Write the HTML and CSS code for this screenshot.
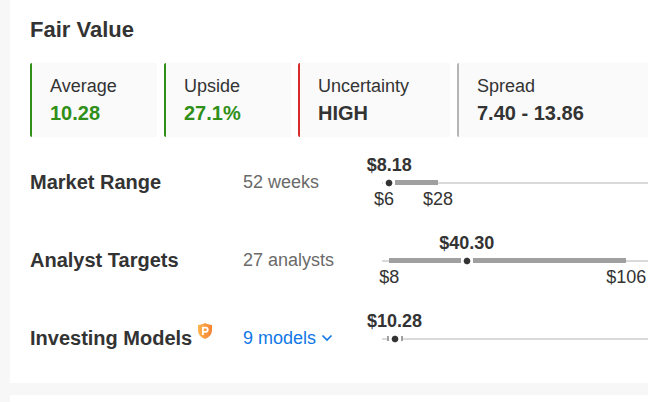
FILE: index.html
```html
<!DOCTYPE html>
<html lang="en">
<head>
<meta charset="utf-8">
<title>Fair Value</title>
<link rel="stylesheet" href="styles.css">
</head>
<body>
<main class="page">
  <section class="card">
    <h2 class="title">Fair Value</h2>
    <div class="tiles">
      <div class="tile tile-green"><span class="label">Average</span><strong class="figure">10.28</strong></div>
      <div class="tile tile-green"><span class="label">Upside</span><strong class="figure">27.1%</strong></div>
      <div class="tile tile-red"><span class="label">Uncertainty</span><strong class="figure">HIGH</strong></div>
      <div class="tile"><span class="label">Spread</span><strong class="figure">7.40 - 13.86</strong></div>
    </div>
    <div class="row">
      <h3 class="name">Market Range</h3>
      <span class="basis">52 weeks</span>
      <div class="chart">
        <div class="line"><b class="mark" style="left:2.7%">$8.18</b></div>
        <div class="track">
          <span class="range" style="left:2.7%;width:18.4%"></span>
          <span class="dot" style="left:2.7%"></span>
        </div>
        <div class="line"><span class="mark" style="left:0.8%">$6</span><span class="mark" style="left:21.1%">$28</span></div>
      </div>
    </div>
    <div class="row">
      <h3 class="name">Analyst Targets</h3>
      <span class="basis">27 analysts</span>
      <div class="chart">
        <div class="line"><b class="mark" style="left:31.9%">$40.30</b></div>
        <div class="track">
          <span class="range" style="left:2.7%;width:89%"></span>
          <span class="dot" style="left:31.9%"></span>
        </div>
        <div class="line"><span class="mark" style="left:2.7%">$8</span><span class="mark" style="left:91.8%">$106</span></div>
      </div>
    </div>
    <div class="row">
      <h3 class="name">Investing Models
        <svg class="badge" viewBox="0 0 14 16" aria-hidden="true">
          <defs><linearGradient id="g" x1="0" y1="0" x2="1" y2="0"><stop offset="0" stop-color="#ffb54d"/><stop offset="1" stop-color="#f58232"/></linearGradient></defs>
          <path fill="url(#g)" d="M7 0C9 1.200 11.300 1.800 14 2V7C14 11.200 11.300 14.400 7 16C2.700 14.400 0 11.200 0 7V2C2.700 1.800 5 1.200 7 0Z"/>
          <path fill="none" stroke="#fff" stroke-width="1.8" d="M4.900 12V4.700H7.700A2 2 0 0 1 7.700 8.800H4.900"/>
        </svg>
      </h3>
      <button class="models" type="button">9 models
        <svg class="chevron" viewBox="0 0 12 8" aria-hidden="true"><path fill="none" stroke="currentColor" stroke-width="1.7" d="M1.500 1.500L6 6L10.500 1.500"/></svg>
      </button>
      <div class="chart">
        <div class="line"><b class="mark" style="left:4.7%">$10.28</b></div>
        <div class="track">
          <span class="range" style="left:1.9%;width:6%"></span>
          <span class="dot" style="left:4.7%"></span>
        </div>
        <div class="line"></div>
      </div>
    </div>
  </section>
  <section class="card"></section>
</main>
</body>
</html>
```
FILE: styles.css
```css
* { box-sizing: border-box; }
body {
  margin: 0;
  background: #f7f7f7;
  color: #333;
  font: 18px/24px "Liberation Sans", Arial, sans-serif;
  overflow: hidden;
}
.page {
  display: flex;
  flex-direction: column;
  gap: 12px;
  padding-left: 10px;
}
.card {
  min-height: 24px;
  padding: 16px 0 6px 20px;
  background: #fff;
}
.title, .name { margin: 0; font-weight: 700; }
.title { margin-bottom: 19px; font-size: 22px; line-height: 28px; }
.tiles {
  display: grid;
  grid-template-columns: 127fr 127fr 152fr 191fr;
  gap: 7px;
  margin-bottom: 6px;
}
.tile {
  display: flex;
  flex-direction: column;
  padding: 10px 0 10px 18px;
  border-left: 2px solid #b5b5b5;
  border-radius: 2px 0 0 2px;
  background: #fafafa;
  white-space: nowrap;
}
.tile-green { border-color: #2f8f18; }
.tile-red { border-color: #d92b2b; }
.label { line-height: 26px; }
.figure { font-size: 20px; line-height: 28px; }
.tile-green .figure { color: #2f8f18; }
.row {
  display: grid;
  grid-template-columns: 213px 139px 1fr;
  align-items: center;
  height: 78px;
  white-space: nowrap;
}
.name { display: flex; align-items: center; gap: 6px; font-size: 20px; }
.basis { color: #6a6a6a; }
.models {
  justify-self: start;
  padding: 0;
  border: 0;
  background: none;
  color: #1177e6;
  font: inherit;
  cursor: pointer;
}
.badge { width: 14px; height: 16px; margin-bottom: 14px; }
.chevron { width: 12px; height: 8px; vertical-align: 2px; }
.line { position: relative; height: 24px; }
.mark { position: absolute; transform: translateX(-50%); }
.track {
  position: relative;
  height: 2px;
  margin: 5px 0 3px;
  background: #dadada;
}
.range {
  position: absolute;
  top: -2px;
  height: 5px;
  background: #a0a0a0;
}
.dot {
  position: absolute;
  top: -5px;
  width: 12px;
  height: 12px;
  background: radial-gradient(circle at center, #333 2.8px, #fff 3.8px);
  transform: translateX(-50%);
}
```
